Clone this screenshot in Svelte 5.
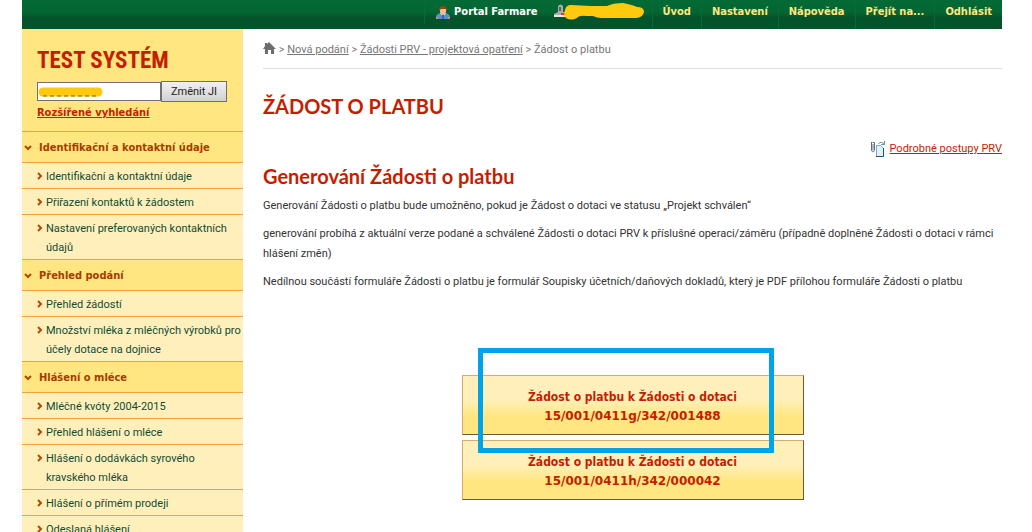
<script>
    let searchText = "";

    const topLinks = ["Úvod", "Nastavení", "Nápověda", "Přejít na...", "Odhlásit"];

    const menu = [
        {
            title: "Identifikační a kontaktní údaje",
            items: [
                "Identifikační a kontaktní údaje",
                "Přiřazení kontaktů k žádostem",
                "Nastavení preferovaných kontaktních údajů",
            ],
        },
        {
            title: "Přehled podání",
            items: [
                "Přehled žádostí",
                "Množství mléka z mléčných výrobků pro účely dotace na dojnice",
            ],
        },
        {
            title: "Hlášení o mléce",
            items: [
                "Mléčné kvóty 2004-2015",
                "Přehled hlášení o mléce",
                "Hlášení o dodávkách syrového kravského mléka",
                "Hlášení o přímém prodeji",
                "Odeslaná hlášení",
            ],
        },
    ];

    const requests = [
        { code: "15/001/0411g/342/001488", marked: true },
        { code: "15/001/0411h/342/000042", marked: false },
    ];
</script>

<div class="page">
    <header>
        <a class="portal" href="#portal">
            <svg width="14" height="13" viewBox="0 0 14 13" aria-hidden="true">
                <path d="M0 13V10Q1 8 4 7H10Q13 8 14 10V13Z" fill="#5a8fcb" />
                <path d="M4 7L7 11L10 7Z" fill="#e8eef6" />
                <path d="M6 8H8V13H6Z" fill="#3c62a8" />
                <path d="M0 11H2V13H0ZM12 11H14V13H12Z" fill="#e0885a" />
                <path d="M4 3H10V6Q9 9 7 9Q5 9 4 6Z" fill="#f3bd8c" />
                <path d="M3 5Q2 0 7 0Q12 0 11 5L10 3H5Z" fill="#8a4a1c" />
            </svg>
            Portal Farmare
        </a>
        <a class="user" href="#user" aria-label="Uživatel">
            <svg width="92" height="20" viewBox="0 0 92 20" aria-hidden="true">
                <path d="M5 4Q8 1 10 4V10H13V14H1V12L5 10Z" fill="#a9adab" />
                <path d="M6 5H8V9H6Z" fill="#56615c" />
                <path d="M1 13H12V15H1Z" fill="#e8e8e8" />
                <path d="M8 11H13V13H8Z" fill="#e03434" />
                <path
                    d="M12 8Q13 3 18 3L38 4Q48 4 54 4Q60 1 70 1Q80 3 84 5Q91 5 91 10Q90 15 84 16L48 16Q44 16 40 14H34Q26 13 24 16Q18 19 13 16Q10 13 12 8Z"
                    fill="#ffc90e"
                />
            </svg>
        </a>
        <nav>
            {#each topLinks as link}
                <a href="#top">{link}</a>
            {/each}
        </nav>
    </header>

    <div class="columns">
        <aside>
            <form class="search" on:submit|preventDefault>
                <h2>TEST SYSTÉM</h2>
                <div class="search-row">
                    <div class="field">
                        <input type="text" aria-label="JI" bind:value={searchText} />
                        <svg class="scribble" width="66" height="11" viewBox="0 0 66 11" aria-hidden="true">
                            <path d="M5 5H60" stroke="#ffc90e" stroke-width="9" stroke-linecap="round" />
                            <path d="M5 9H61" stroke="#7b6420" stroke-dasharray="4 3" />
                        </svg>
                    </div>
                    <button type="submit">Změnit JI</button>
                </div>
                <a href="#search">Rozšířené vyhledání</a>
            </form>

            {#each menu as group}
                <section>
                    <h3>
                        <svg width="8" height="6" viewBox="0 0 8 6" aria-hidden="true">
                            <path d="M1 1L4 4L7 1" />
                        </svg>
                        {group.title}
                    </h3>
                    <ul>
                        {#each group.items as item}
                            <li>
                                <svg width="6" height="8" viewBox="0 0 6 8" aria-hidden="true">
                                    <path d="M1 1L4 4L1 7" />
                                </svg>
                                <a href="#menu">{item}</a>
                            </li>
                        {/each}
                    </ul>
                </section>
            {/each}
        </aside>

        <main>
            <div class="breadcrumb">
                <a class="home" href="#home" aria-label="Domů">
                    <svg width="13" height="12" viewBox="0 0 13 12" aria-hidden="true">
                        <path d="M6 0L13 7H11V12H8V8H5V12H2V7H0L2 4V1H4V2Z" fill="#6e6e6e" />
                    </svg>
                </a>
                &gt; <a href="#new">Nová podání</a> &gt;
                <a href="#prv">Žádosti PRV - projektová opatření</a> &gt; Žádost o platbu
            </div>

            <h1>ŽÁDOST O PLATBU</h1>

            <div class="help">
                <svg width="15" height="16" viewBox="0 0 15 16" aria-hidden="true">
                    <path d="M5.5 4.5H9.5L12.5 7.5V15.5H5.5Z" fill="#e4eef9" stroke="#8ba3bd" />
                    <path d="M12.5 7V15.5H5" fill="none" stroke="#2f4a6b" />
                    <path d="M0.5 1V9Q2 13 3.5 9V1.5H1.5M2 3V9" fill="none" stroke="#5d6f82" />
                    <path d="M7.5 2.5Q10 0 13 2.5M13.5 0V3.5H10" fill="none" stroke="#6d8fb5" />
                </svg>
                <a href="#help">Podrobné postupy PRV</a>
            </div>

            <h2>Generování Žádosti o platbu</h2>
            <p>Generování Žádosti o platbu bude umožněno, pokud je Žádost o dotaci ve statusu „Projekt schválen“</p>
            <p>
                generování probíhá z aktuální verze podané a schválené Žádosti o dotaci PRV k příslušné operaci/záměru
                (případně doplněné Žádosti o dotaci v rámci hlášení změn)
            </p>
            <p>
                Nedílnou součástí formuláře Žádosti o platbu je formulář Soupisky účetních/daňových dokladů, který je
                PDF přílohou formuláře Žádosti o platbu
            </p>

            <div class="requests">
                {#each requests as request}
                    <div class="request">
                        <button type="button">
                            Žádost o platbu k Žádosti o dotaci
                            <span class="code">{request.code}</span>
                        </button>
                        {#if request.marked}
                            <div class="marker"></div>
                        {/if}
                    </div>
                {/each}
            </div>
        </main>
    </div>
</div>

<style>
    :global(body) {
        margin: 0;
        background: #fff;
    }

    .page {
        height: 100vh;
        overflow: hidden;
        display: flex;
        flex-direction: column;
        padding: 0 30px 0 22px;
        font: 11px/20px Roboto, Tahoma, sans-serif;
        color: #333;
    }

    header {
        display: flex;
        flex: none;
        justify-content: flex-end;
        height: 29px;
        background: linear-gradient(#046a35 0, #046632 12px, #04532a 18px, #04532a 100%);
        font-family: "DejaVu Sans Condensed", Tahoma, sans-serif;
        font-weight: bold;
        line-height: 24px;
    }

    header a {
        color: #ffe680;
        text-decoration: none;
    }

    header .portal {
        display: flex;
        align-items: center;
        gap: 4px;
        height: 24px;
        padding: 0 0 0 11px;
        border-left: 1px solid #086a38;
        color: #fff;
    }

    .user {
        padding: 2px 7px 0 15px;
    }

    .user svg {
        display: block;
    }

    nav {
        display: flex;
    }

    nav a {
        padding: 0 10px;
        border-left: 1px solid #086a38;
    }

    .columns {
        display: flex;
        flex: 1;
        min-height: 0;
    }

    aside {
        flex: none;
        width: 221px;
        overflow: hidden;
        background: #fff0bb;
    }

    .search {
        padding: 16px 16px 8px 15px;
        background: #ffe680;
    }

    .search h2 {
        margin: 0 0 4px;
        color: #c41e00;
        font: bold 23px/32px "Roboto Condensed", "Open Sans Condensed", Lato, sans-serif;
    }

    .search-row {
        display: flex;
        align-items: center;
        margin-bottom: 1px;
    }

    .field {
        position: relative;
        flex: 1;
    }

    input {
        display: block;
        box-sizing: border-box;
        width: 100%;
        height: 19px;
        border: 1px solid #707070;
        background: #fff;
        font: inherit;
    }

    .scribble {
        position: absolute;
        top: 5px;
        left: 1px;
    }

    .search button {
        width: 66px;
        height: 21px;
        padding: 0;
        border: 1px solid #707070;
        background: linear-gradient(#f1f1f1, #d2d2d2);
        color: #222;
        font: inherit;
        line-height: 18px;
    }

    .search > a {
        display: block;
        color: #c41e00;
        font-family: "DejaVu Sans Condensed", Tahoma, sans-serif;
        font-weight: bold;
    }

    aside h3 {
        display: flex;
        align-items: center;
        gap: 7px;
        margin: 0;
        padding: 6px 2px 4px;
        border-top: 1px solid #f0a040;
        background: #ffe680;
        color: #a53c00;
        font: bold 11px/20px "DejaVu Sans Condensed", Tahoma, sans-serif;
    }

    aside svg path {
        fill: none;
    }

    h3 path,
    li path {
        stroke: #b04a00;
        stroke-width: 2;
    }

    ul {
        margin: 0;
        padding: 0;
        list-style: none;
    }

    li {
        display: flex;
        gap: 3px;
        padding: 4px 0 2px 15px;
        border-top: 1px solid #f0a040;
        line-height: 19px;
    }

    li svg {
        flex: none;
        margin-top: 5px;
    }

    li a {
        color: #0f4b35;
        text-decoration: none;
    }

    main {
        flex: 1;
        min-width: 0;
        padding: 11px 0 0 20px;
    }

    .breadcrumb {
        padding-bottom: 8px;
        border-bottom: 1px solid #ddd;
        color: #777;
    }

    .breadcrumb a {
        color: #777;
    }

    .home svg {
        vertical-align: -1px;
    }

    h1 {
        margin: 21px 0 0;
        color: #c41e00;
        font: bold 20px/32px Lato, sans-serif;
    }

    .help {
        display: flex;
        justify-content: flex-end;
        align-items: center;
        gap: 3px;
        margin-top: 17px;
    }

    .help a {
        color: #c41e00;
    }

    main h2 {
        margin: 5px 0 8px;
        color: #c41e00;
        font: bold 20px/24px Lato, sans-serif;
    }

    p {
        margin: 0 0 8px;
    }

    .requests {
        display: flex;
        flex-direction: column;
        align-items: center;
        gap: 5px;
        padding-top: 75px;
    }

    .request {
        position: relative;
        width: 342px;
    }

    .request button {
        display: block;
        width: 100%;
        height: 60px;
        padding: 4px 0 0;
        border: 1px solid;
        border-color: #d9ad68 #6b5a34 #6b5a34 #d9ad68;
        background: linear-gradient(#fff0bb 40%, #ffe680 70%);
        color: #c41e00;
        font: bold 12px/19px "DejaVu Sans Condensed", Tahoma, sans-serif;
    }

    .code {
        display: block;
        font-family: "DejaVu Sans", Verdana, sans-serif;
    }

    /* blue frame over the request that was picked */
    .marker {
        position: absolute;
        z-index: 1;
        top: -27px;
        left: 16px;
        box-sizing: border-box;
        width: 296px;
        height: 105px;
        border: 5px solid #00a2e8;
        pointer-events: none;
    }
</style>
